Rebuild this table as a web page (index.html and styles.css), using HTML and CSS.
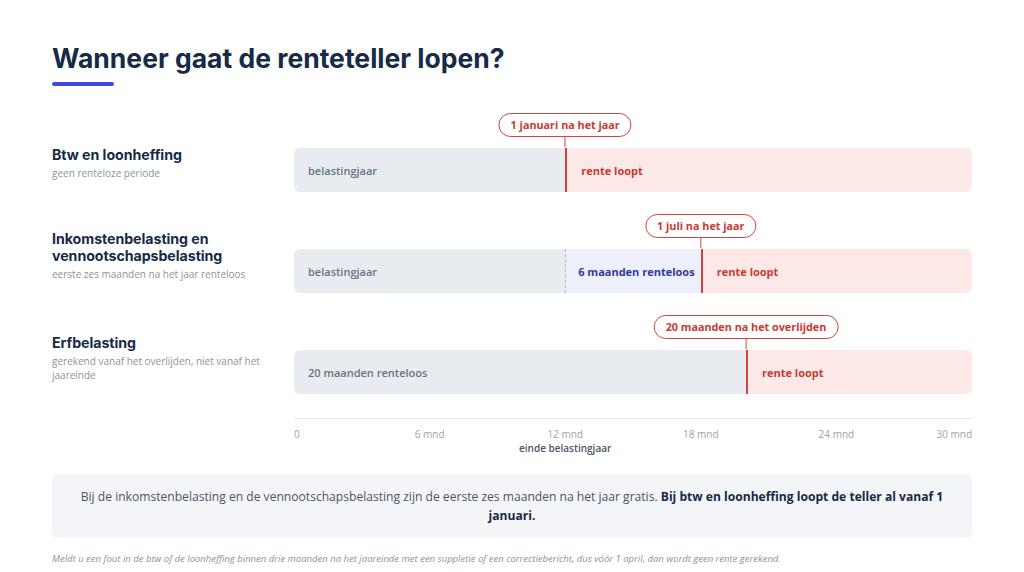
FILE: index.html
```html
<!DOCTYPE html>
<html lang="nl">
<head>
<meta charset="utf-8">
<title>Wanneer gaat de renteteller lopen?</title>
<link rel="stylesheet" href="styles.css">
</head>
<body>
<main class="page">
  <h1 class="title">Wanneer gaat de renteteller lopen?</h1>
  <div class="title-bar"></div>

  <section class="chart">
    <div class="row">
      <div class="label">
        <h2 class="label-title">Btw en loonheffing</h2>
        <p class="label-sub">geen renteloze periode</p>
      </div>
      <div class="track">
        <div class="pill-lane"><span class="pill" style="left:40%">1 januari na het jaar</span></div>
        <div class="bar">
          <div class="seg seg-grey" style="width:40%">belastingjaar</div>
          <div class="seg seg-red marker">rente loopt</div>
        </div>
      </div>
    </div>

    <div class="row">
      <div class="label">
        <h2 class="label-title">Inkomstenbelasting en vennootschapsbelasting</h2>
        <p class="label-sub">eerste zes maanden na het jaar renteloos</p>
      </div>
      <div class="track">
        <div class="pill-lane"><span class="pill" style="left:60%">1 juli na het jaar</span></div>
        <div class="bar">
          <div class="seg seg-grey" style="width:40%">belastingjaar</div>
          <div class="seg seg-blue" style="width:20%">6 maanden renteloos</div>
          <div class="seg seg-red marker">rente loopt</div>
        </div>
      </div>
    </div>

    <div class="row">
      <div class="label">
        <h2 class="label-title">Erfbelasting</h2>
        <p class="label-sub">gerekend vanaf het overlijden, niet vanaf het jaareinde</p>
      </div>
      <div class="track">
        <div class="pill-lane"><span class="pill" style="left:66.667%">20 maanden na het overlijden</span></div>
        <div class="bar">
          <div class="seg seg-grey" style="width:66.667%">20 maanden renteloos</div>
          <div class="seg seg-red marker">rente loopt</div>
        </div>
      </div>
    </div>

    <div class="row axis-row">
      <div class="label"></div>
      <div class="axis">
        <span class="tick tick-start" style="left:0%">0</span>
        <span class="tick" style="left:20%">6 mnd</span>
        <span class="tick" style="left:40%">12 mnd<b class="tick-note">einde belastingjaar</b></span>
        <span class="tick" style="left:60%">18 mnd</span>
        <span class="tick" style="left:80%">24 mnd</span>
        <span class="tick tick-end" style="left:100%">30 mnd</span>
      </div>
    </div>
  </section>

  <div class="note">
    Bij de inkomstenbelasting en de vennootschapsbelasting zijn de eerste zes maanden na het jaar gratis. <strong>Bij btw en loonheffing loopt de teller al vanaf 1 januari.</strong>
  </div>

  <p class="footnote">Meldt u een fout in de btw of de loonheffing binnen drie maanden na het jaareinde met een suppletie of een correctiebericht, dus vóór 1 april, dan wordt geen rente gerekend.</p>
</main>
</body>
</html>
```

FILE: styles.css
```css
* { box-sizing: border-box; }

html, body {
  margin: 0;
  padding: 0;
  background: #ffffff;
}

body {
  font-family: "Open Sans", "Noto Sans", sans-serif;
  color: #4b5565;
}

.page {
  width: 1024px;
  height: 572px;
  padding: 41px 52px 0 52px;
  overflow: hidden;
}

.title {
  margin: 0;
  font-family: "Inter", "Noto Sans", sans-serif;
  font-weight: 700;
  font-size: 26.5px;
  line-height: 34px;
  letter-spacing: 0;
  color: #172a46;
}

.title-bar {
  width: 62px;
  height: 4px;
  margin-top: 7px;
  border-radius: 2px;
  background: #3d4be2;
}

.chart {
  margin-top: 27px;
  display: flex;
  flex-direction: column;
  gap: 22px;
}

.row {
  display: grid;
  grid-template-columns: 242px 678px;
}

.label {
  align-self: end;
  padding-right: 24px;
  padding-bottom: 12px;
}

.label-title {
  margin: 0;
  font-family: "Inter", "Noto Sans", sans-serif;
  font-weight: 700;
  font-size: 14.2px;
  line-height: 17px;
  letter-spacing: -0.05px;
  color: #172a46;
}

.label-sub {
  margin: 3px 0 0 0;
  font-size: 10px;
  line-height: 14px;
  color: #8a93a3;
}

.track {
  display: flex;
  flex-direction: column;
  gap: 11px;
}

.pill-lane {
  position: relative;
  height: 24px;
}

.pill {
  position: absolute;
  top: 0;
  transform: translateX(-50%);
  height: 24px;
  padding: 0 11px;
  border: 1.5px solid #d0463d;
  border-radius: 12px;
  background: #ffffff;
  color: #c93a31;
  font-size: 10.8px;
  font-weight: 700;
  line-height: 21px;
  white-space: nowrap;
}

.pill::after {
  content: "";
  position: absolute;
  left: 50%;
  top: 100%;
  width: 1px;
  height: 11px;
  margin-left: -0.5px;
  background: #d0463d;
}

.bar {
  display: flex;
  height: 44px;
  border-radius: 6px;
  overflow: hidden;
}

.seg {
  display: flex;
  align-items: center;
  padding-left: 14px;
  font-size: 11px;
  white-space: nowrap;
}

.seg-grey {
  background: #e8ebf0;
  color: #687385;
  font-weight: 600;
}

.seg-blue {
  background: #edf0fc;
  color: #2d3b9e;
  font-weight: 700;
  padding-left: 12px;
  border-left: 1px dashed #b4bbc8;
}

.seg-red {
  flex: 1;
  background: #fce9e7;
  color: #c93a31;
  font-weight: 700;
}

.marker {
  border-left: 2px solid #d0433a;
}

.axis-row {
  margin-top: 2px;
}

.axis {
  position: relative;
  height: 40px;
  border-top: 1.5px solid #e4e8ee;
}

.tick {
  position: absolute;
  top: 8px;
  transform: translateX(-50%);
  font-size: 10px;
  line-height: 14px;
  color: #9aa3b0;
  white-space: nowrap;
  text-align: center;
}

.tick-start { transform: none; }
.tick-end { transform: translateX(-100%); }

.tick-note {
  display: block;
  font-weight: 600;
  color: #4b5565;
}

.note {
  margin-top: 16px;
  padding: 13px 24px;
  border-radius: 6px;
  background: #f3f5f8;
  text-align: center;
  font-size: 12.1px;
  line-height: 19px;
  color: #4b5565;
}

.note strong {
  font-weight: 700;
  color: #172a46;
}

.footnote {
  margin: 14px 0 0 0;
  font-size: 9.5px;
  line-height: 13px;
  font-style: italic;
  color: #8a93a3;
}
```
